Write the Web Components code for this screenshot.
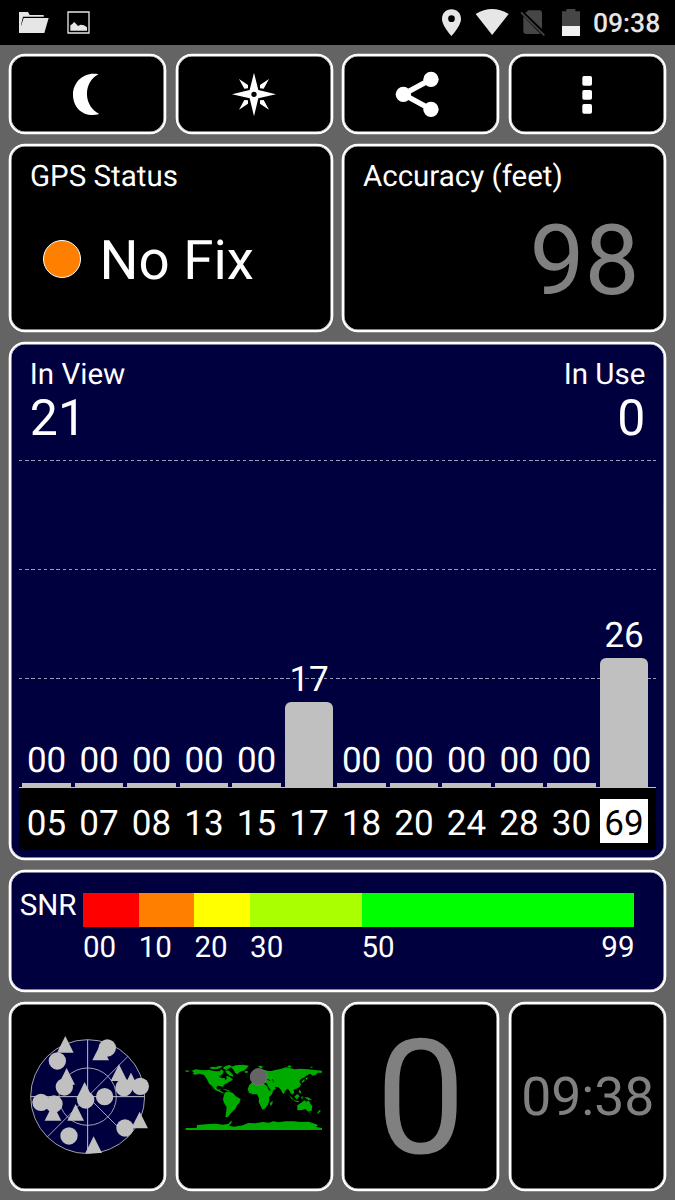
<!DOCTYPE html>
<html lang="en">
<head>
<meta charset="UTF-8">
<meta name="viewport" content="width=device-width, initial-scale=1.0">
<title>GPS Status</title>
<style>
    body {
        margin: 0;
        background: #646464;
        font-family: Roboto, "Noto Sans", sans-serif;
        color: #fff;
        text-rendering: geometricPrecision;
    }
</style>
</head>
<body>
<gps-app></gps-app>

<script>
class StatusBar extends HTMLElement {
    connectedCallback() {
        this.attachShadow({ mode: 'open' });
        this.shadowRoot.innerHTML = `
            <style>
                :host {
                    display: flex;
                    align-items: center;
                    height: 45px;
                    box-sizing: border-box;
                    padding: 0 15px 0 18px;
                    background: #000;
                    color: #e6e6e6;
                }

                svg {
                    display: block;
                    height: 45px;
                    flex: none;
                }

                .time {
                    width: 67px;
                    font-size: 26.5px;
                    font-weight: 500;
                    line-height: 47px;
                    height: 45px;
                    margin-left: 12px;
                    white-space: nowrap;
                }

                .spacer {
                    flex: 1;
                }
            </style>
            <svg width="76" viewBox="54 0 228 135">
                <path fill="#e6e6e6" d="M57 36H84L89 45H131V50H69L63 75V98H57Z"/>
                <path fill="#e6e6e6" d="M71 54H146L133 99H57V78H63Z"/>
                <path fill="none" stroke="#e6e6e6" stroke-width="4" d="M204 36H267V99H204Z"/>
                <path fill="#e6e6e6" d="M211 92V76L217 72L222 66L228 71L234 78L242 74L252 76L261 82V92Z"/>
            </svg>
            <div class="spacer"></div>
            <svg width="139" viewBox="321 0 417 135">
                <path fill="#e6e6e6" fill-rule="evenodd" d="M349.500 28C333 28 321 40 321 57C321 77 349.500 108 349.500 108C349.500 108 378 77 378 57C378 40 366 28 349.500 28ZM349.500 46A10 10 0 1 1 349.500 66A10 10 0 1 1 349.500 46Z"/>
                <path fill="#e6e6e6" d="M422 42Q471 12 521 42L471.500 105Z"/>
                <path fill="#464646" d="M580 31H614Q621 31 621 38V87L571 39ZM565 49L616 101Q614 102 611 102H574Q565 102 565 94Z"/>
                <path stroke="#464646" stroke-width="5" d="M558 37L628 106"/>
                <path fill="#464646" d="M681 34H694V27H721V34H735V78H681Z"/>
                <path fill="#f0f0f0" d="M681 78H735V108H681Z"/>
            </svg>
            <span class="time"><slot></slot></span>
        `;
    }
}

class GpsCard extends HTMLElement {
    connectedCallback() {
        this.attachShadow({ mode: 'open' });
        this.shadowRoot.innerHTML = `
            <style>
                :host {
                    display: flex;
                    flex-direction: column;
                    box-sizing: border-box;
                    min-width: 0;
                    background: #000;
                    border: 2px solid #fff;
                    border-radius: 16px;
                    box-shadow: 0 0 0 0.3px #fff, inset 0 0 0 0.5px #fff;
                    overflow: hidden;
                }

                :host([center]) {
                    align-items: center;
                    justify-content: center;
                }

                :host([navy]) {
                    background: #00003f;
                }
            </style>
            <slot></slot>
        `;
    }
}

const ICONS = {
    moon: ['193 213 140 140', '<path d="M297 223C252 214 220 247 220 284C220 327 257 355 299 342C250 319 250 245 297 223Z"/>'],
    compass: ['692 213 140 140', `
        <path fill-rule="evenodd" d="M761 218L774 270L827 283L774 295L761 349L748 295L695 283L748 270ZM761 275A8 8 0 1 0 761 291A8 8 0 1 0 761 275Z"/>
        <path d="M716 237L743 255L743 265L732 266ZM806 237L790 266L779 265L779 255ZM716 329L732 300L743 301L743 311ZM806 329L779 311L779 301L790 300Z"/>`],
    share: ['187 213 140 140', `
        <path fill="none" stroke="#fff" stroke-width="16" d="M289 238L206 283L289 328"/>
        <circle cx="206" cy="283" r="23"/><circle cx="289" cy="238" r="23"/><circle cx="289" cy="328" r="23"/>`],
    more: ['686 213 140 140', `
        <rect x="741" y="228" width="29" height="29" rx="5"/>
        <rect x="741" y="270" width="29" height="29" rx="5"/>
        <rect x="741" y="312" width="29" height="29" rx="5"/>`]
};

class GpsIcon extends HTMLElement {
    connectedCallback() {
        const [box, shapes] = ICONS[this.getAttribute('name')];
        this.attachShadow({ mode: 'open' });
        this.shadowRoot.innerHTML = `
            <style>
                :host {
                    display: block;
                }

                svg {
                    display: block;
                    width: 46.67px;
                    height: 46.67px;
                    overflow: visible;
                }
            </style>
            <svg viewBox="${box}" fill="#fff">${shapes}</svg>
        `;
    }
}

class SignalChart extends HTMLElement {
    connectedCallback() {
        const sats = this.getAttribute('data').split(' ').map(s => s.split(':'));
        const strongest = sats[sats.length - 1][0];

        this.attachShadow({ mode: 'open' });
        this.shadowRoot.innerHTML = `
            <style>
                :host {
                    display: block;
                    font-size: 35px;
                    line-height: 35px;
                    --dash: repeating-linear-gradient(90deg, #9c9cb4 0 3.5px, transparent 3.5px 6.22px);
                }

                .plot, .axis {
                    display: grid;
                    grid-template-columns: repeat(${sats.length}, 52.5px);
                    padding-left: 1px;
                }

                .plot {
                    height: 327px;
                    align-items: end;
                    border-bottom: 1px solid #c0c0c0;
                    background:
                        var(--dash) 0 0 / 100% 1px no-repeat,
                        var(--dash) 0 109px / 100% 1px no-repeat,
                        var(--dash) 0 218px / 100% 1px no-repeat;
                }

                .sat {
                    display: flex;
                    flex-direction: column;
                    align-items: center;
                    gap: 5px;
                }

                .bar {
                    width: 48.3px;
                    background: #c0c0c0;
                }

                .bar.high {
                    border-radius: 6px 6px 0 0;
                }

                .axis {
                    height: 62px;
                    align-items: center;
                    justify-items: center;
                    background: #000;
                }

                .id {
                    width: 48.3px;
                    height: 44px;
                    margin-top: 4px;
                    line-height: 49px;
                    text-align: center;
                }

                .id.active {
                    background: #fff;
                    color: #000;
                }
            </style>
            <div class="plot">
                ${sats.map(([id, snr]) => `
                    <div class="sat">
                        <span>${snr}</span>
                        <div class="bar ${snr > 0 ? 'high' : ''}" style="height: ${Math.max(4, snr * 4.95 + 0.7)}px"></div>
                    </div>
                `).join('')}
            </div>
            <div class="axis">
                ${sats.map(([id]) => `<div class="id ${id === strongest ? 'active' : ''}">${id}</div>`).join('')}
            </div>
        `;
    }
}

class SnrLegend extends HTMLElement {
    connectedCallback() {
        this.attachShadow({ mode: 'open' });
        this.shadowRoot.innerHTML = `
            <style>
                :host {
                    display: flex;
                    font-size: 29.5px;
                    line-height: 30px;
                }

                .name {
                    width: 63.3px;
                    margin-top: -2px;
                    padding-left: 0.4px;
                }

                .scale {
                    display: grid;
                    grid-template-columns: 10fr 10fr 10fr 20fr 49fr;
                    grid-template-rows: 34px 30px;
                    row-gap: 5.5px;
                    width: 551.5px;
                }

                .last {
                    display: flex;
                    justify-content: space-between;
                }
            </style>
            <span class="name">SNR</span>
            <div class="scale">
                <div style="background: #ff0000"></div>
                <div style="background: #ff8000"></div>
                <div style="background: #ffff00"></div>
                <div style="background: #aaff00"></div>
                <div style="background: #00ff00"></div>
                <span>00</span>
                <span>10</span>
                <span>20</span>
                <span>30</span>
                <div class="last"><span>50</span><span>99</span></div>
            </div>
        `;
    }
}

class SkyView extends HTMLElement {
    connectedCallback() {
        const circles = [[277, 84], [127, 123], [148, 201], [212, 240], [269, 230], [327, 203], [376, 199], [78, 247], [117, 252], [330, 324], [162, 348]];
        const triangles = [[151, 48], [257, 71], [155, 144], [209, 186], [312, 133], [348, 158], [114, 252], [182, 252], [374, 275], [236, 349]];

        this.attachShadow({ mode: 'open' });
        this.shadowRoot.innerHTML = `
            <style>
                :host {
                    display: block;
                }

                svg {
                    display: block;
                    width: 145.3px;
                    height: 153.3px;
                }
            </style>
            <svg viewBox="0 0 436 460">
                <circle cx="218" cy="230" r="171" fill="#00003f"/>
                <g fill="none" stroke="#c0c0c8" stroke-width="2.500">
                    <circle cx="218" cy="230" r="171"/>
                    <circle cx="218" cy="230" r="86"/>
                    <path d="M97 351L339 109M218 230L339 351"/>
                    <path stroke-width="3" d="M218 59V401M47 230H389"/>
                </g>
                <g fill="#c0c0c0">
                    ${circles.map(([x, y]) => `<circle cx="${x}" cy="${y}" r="26"/>`).join('')}
                    ${triangles.map(([x, y]) => `<path d="M${x} ${y}L${x + 25} ${y + 50}H${x - 25}Z"/>`).join('')}
                </g>
            </svg>
        `;
    }
}

class WorldMap extends HTMLElement {
    connectedCallback() {
        this.attachShadow({ mode: 'open' });
        this.shadowRoot.innerHTML = `
            <style>
                :host {
                    display: block;
                }

                svg {
                    display: block;
                    width: 150px;
                    height: 93.3px;
                }
            </style>
            <svg viewBox="12 0 450 280">
                <g fill="#00ab00">
                    <!-- North America -->
                    <path d="M50 62L62 58L82 61L103 60L120 64L134 64L139 58L146 64L143 72L135 78L139 84L149 85L151 91L155 86L154 77L163 80L174 88L167 93L158 98L149 103L143 111L137 109L130 107L124 111L126 117L133 119L138 116L135 122L142 126L148 129L142 130L133 125L120 120L111 108L102 101L96 88L87 75L72 71L61 74L52 72L57 68Z"/>
                    <path d="M102 54L111 50L122 52L132 48L143 49L136 54L127 57L114 58ZM143 55L151 48L163 45L171 49L163 55L154 60ZM150 61L162 62L173 73L175 80L164 77L155 70ZM167 51L182 46L204 44L221 47L216 55L207 62L193 66L187 73L181 69L174 58ZM31 61L43 62L42 65L32 65ZM141 116L158 119L166 123L155 122Z"/>
                    <!-- South America -->
                    <path d="M149 128L160 124L175 130L182 139L197 147L193 159L187 164L183 174L175 182L169 188L162 196L158 202L151 201L153 190L155 172L146 157L144 146Z"/>
                    <!-- Europe and Asia -->
                    <path d="M209 63L219 64L217 69L210 68ZM249 49L258 47L266 51L256 55Z"/>
                    <path d="M230 88L239 78L249 72L257 62L270 60L279 63L290 63L303 59L317 57L333 52L347 55L360 58L376 56L400 58L420 60L441 62L440 69L428 68L423 74L413 77L405 71L394 77L386 83L378 87L373 94L378 103L374 111L363 117L355 119L358 127L353 134L347 130L344 123L338 116L330 122L327 132L322 129L318 119L310 112L299 110L303 116L291 124L284 120L278 109L276 101L267 96L251 97L247 93L241 99L231 99Z"/>
                    <path d="M336 49L345 46L350 50L343 53ZM380 95L388 86L389 93L382 99ZM405 50L415 51L409 54ZM391 84L401 82L394 91ZM341 134L352 144L357 150L350 147ZM358 140L367 132L374 139L365 148ZM357 151L373 154L370 157L358 154ZM373 119L379 126L376 131L371 125ZM378 142L384 138L382 149ZM388 142L400 142L411 150L400 150Z"/>
                    <!-- Africa -->
                    <path d="M230 98L242 96L254 101L267 101L276 108L282 121L294 124L290 134L282 141L283 151L279 164L269 176L262 179L257 168L251 156L252 145L246 133L233 133L222 128L218 117L223 105ZM293 152L292 163L286 168L285 159Z"/>
                    <!-- Australia -->
                    <path d="M367 166L379 158L388 151L395 155L401 151L407 162L412 169L410 182L400 185L391 177L381 180L367 181ZM403 187L407 187L405 191ZM433 180L438 182L431 190L425 191Z"/>
                    <!-- Antarctica -->
                    <path d="M32 234H65L66 225L102 222L121 221L144 224L161 221L169 211L170 218L162 227L178 230L203 226L220 219L241 220L263 216L281 218L296 214L310 217L332 214L356 214L377 216L401 215L422 222L429 225L424 231L441 234V240H32Z"/>
                </g>
                <path stroke="#000" stroke-width="2" fill="none" d="M274 102L286 121M276 88L286 92M292 87L296 97M131 76L137 84"/>
                <circle cx="251" cy="81" r="25.500" fill="#646464" stroke="#7c7c7c" stroke-width="2"/>
            </svg>
        `;
    }
}

class GpsApp extends HTMLElement {
    connectedCallback() {
        this.attachShadow({ mode: 'open' });
        this.shadowRoot.innerHTML = `
            <style>
                :host {
                    display: block;
                    height: 1200px;
                    overflow: hidden;
                }

                main {
                    display: grid;
                    grid-template-columns: repeat(4, 157px);
                    grid-template-rows: 80px 188px 518px 122px 189px;
                    column-gap: 9.5px;
                    row-gap: 10px;
                    padding: 9px 9.3px;
                }

                .half {
                    grid-column: span 2;
                    padding: 16px 18.7px 14px;
                }

                .full {
                    grid-column: 1 / -1;
                }

                .label {
                    font-size: 29.5px;
                    line-height: 30px;
                    white-space: nowrap;
                }

                .fix {
                    display: flex;
                    align-items: center;
                    gap: 18.5px;
                    margin: 40px 0 0 13px;
                    font-size: 54.7px;
                    line-height: 54px;
                    height: 54px;
                }

                .fix span:last-child {
                    padding-top: 4px;
                }

                .dot {
                    width: 38px;
                    height: 38px;
                    box-sizing: border-box;
                    border: 1px solid #fff;
                    border-radius: 50%;
                    background: #ff8000;
                }

                .accuracy {
                    margin-top: 20px;
                    padding-right: 5.5px;
                    font-size: 98px;
                    line-height: 98px;
                    text-align: right;
                    color: #808080;
                }

                .view {
                    padding: 16px 8px 7px;
                }

                .counts {
                    display: flex;
                    justify-content: space-between;
                    padding: 0 10.5px;
                    height: 100px;
                }

                .in-use {
                    text-align: right;
                }

                .count {
                    font-size: 50px;
                    line-height: 50px;
                    margin-top: 4px;
                }

                .legend {
                    padding: 21px 8px 0;
                }

                .speed, .clock {
                    color: #808080;
                    line-height: 1;
                }

                .speed {
                    font-size: 160px;
                    padding-top: 6px;
                }

                .clock {
                    font-size: 53.5px;
                    padding: 3px 0 0 1px;
                }
            </style>
            <status-bar>09:38</status-bar>
            <main>
                <gps-card center><gps-icon name="moon"></gps-icon></gps-card>
                <gps-card center><gps-icon name="compass"></gps-icon></gps-card>
                <gps-card center><gps-icon name="share"></gps-icon></gps-card>
                <gps-card center><gps-icon name="more"></gps-icon></gps-card>
                <gps-card class="half">
                    <div class="label">GPS Status</div>
                    <div class="fix"><span class="dot"></span><span>No Fix</span></div>
                </gps-card>
                <gps-card class="half">
                    <div class="label">Accuracy (feet)</div>
                    <div class="accuracy">98</div>
                </gps-card>
                <gps-card class="full view" navy>
                    <div class="counts">
                        <div>
                            <div class="label">In View</div>
                            <div class="count">21</div>
                        </div>
                        <div class="in-use">
                            <div class="label">In Use</div>
                            <div class="count">0</div>
                        </div>
                    </div>
                    <signal-chart data="05:00 07:00 08:00 13:00 15:00 17:17 18:00 20:00 24:00 28:00 30:00 69:26"></signal-chart>
                </gps-card>
                <gps-card class="full legend" navy>
                    <snr-legend></snr-legend>
                </gps-card>
                <gps-card center><sky-view></sky-view></gps-card>
                <gps-card center><world-map></world-map></gps-card>
                <gps-card center><span class="speed">0</span></gps-card>
                <gps-card center><span class="clock">09:38</span></gps-card>
            </main>
        `;
    }
}

customElements.define('status-bar', StatusBar);
customElements.define('gps-card', GpsCard);
customElements.define('gps-icon', GpsIcon);
customElements.define('signal-chart', SignalChart);
customElements.define('snr-legend', SnrLegend);
customElements.define('sky-view', SkyView);
customElements.define('world-map', WorldMap);
customElements.define('gps-app', GpsApp);
</script>
</body>
</html>
